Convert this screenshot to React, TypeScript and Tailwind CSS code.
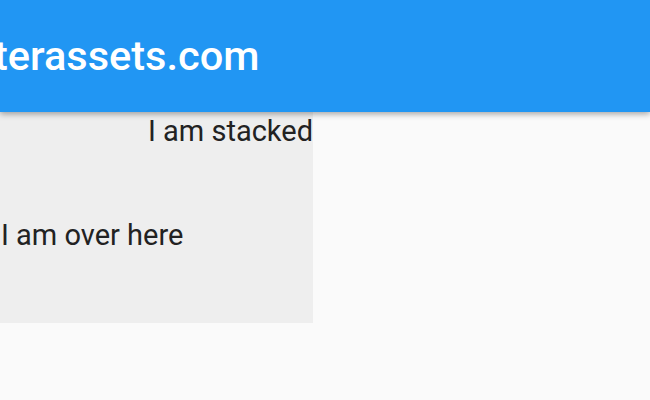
export default function App() {
  return (
    <div className="w-[650px] h-[400px] bg-[#fafafa] overflow-hidden" style={{ fontFamily: 'Roboto, "Liberation Sans", sans-serif' }}>
      <div className="h-[112px] bg-[#2196f3] shadow-[0_2px_6px_rgba(0,0,0,0.35)] relative z-10 flex items-start pt-[32px]">
        <span className="ml-[-6px] text-white text-[41.5px] leading-[48px] font-medium whitespace-nowrap">terassets.com</span>
      </div>
      <div className="w-[313px] h-[211px] bg-[#eeeeee] flex flex-col">
        <div className="mt-[2px] text-right text-[29px] leading-[34px] text-[#222]">I am stacked</div>
        <div className="mt-[70px] ml-[1px] text-[29px] leading-[34px] text-[#222] whitespace-nowrap">I am over here</div>
      </div>
    </div>
  );
}
